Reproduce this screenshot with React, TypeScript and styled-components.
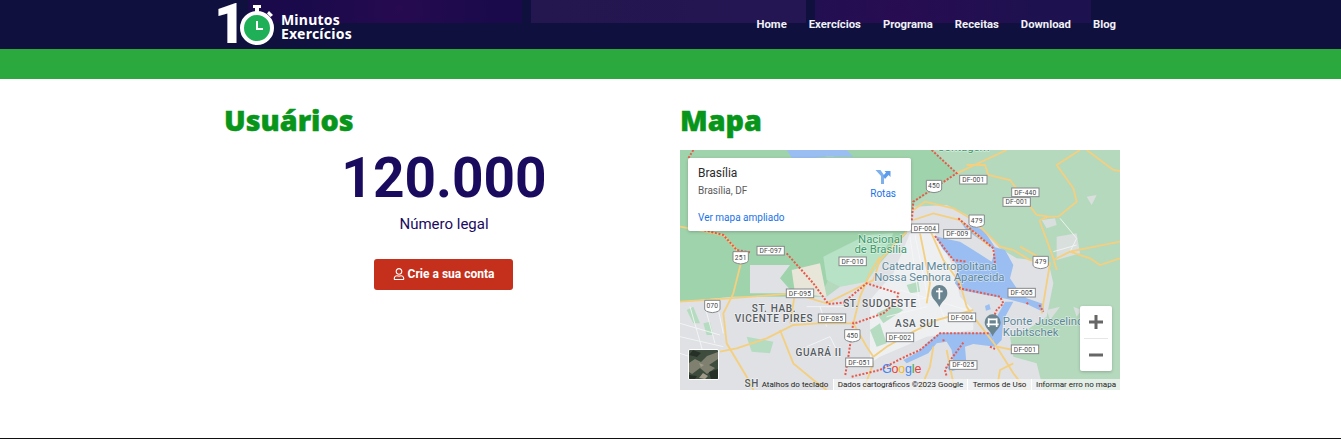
import React, { FC } from 'react';
import styled, { createGlobalStyle } from 'styled-components';
import { FaRegUser } from 'react-icons/fa';

const GlobalStyle = createGlobalStyle`
  html, body {
    margin: 0;
    padding: 0;
    background: #ffffff;
    font-family: 'Roboto', 'Liberation Sans', sans-serif;
  }
`;

const Header = styled.header`
  height: 49px;
  background-color: #10103f;
  background-repeat: no-repeat;
  background-size: 274px 23px, 275px 23px, 276px 23px;
  background-position: 248px 0, 531px 0, 815px 0;
  background-image:
    radial-gradient(circle at 55% 40%, #270a50 0, #1a0a4c 60%),
    linear-gradient(90deg, #24164e, #231653),
    radial-gradient(circle at 30% 50%, #280c52 0, #1e1150 70%);
`;

const HeaderInner = styled.div`
  width: 902px;
  height: 49px;
  margin-left: 218px;
  display: flex;
  align-items: center;
  justify-content: space-between;
`;

const Logo = styled.a`
  display: flex;
  align-items: center;
  color: #ffffff;
  height: 49px;
`;

const LogoOne = styled.span`
  font-family: 'Roboto', sans-serif;
  font-weight: 900;
  font-size: 55px;
  line-height: 49px;
  margin-left: -4px;
  margin-right: -7px;
`;

const LogoText = styled.span`
  font-family: 'Noto Sans', sans-serif;
  font-weight: 700;
  font-size: 14px;
  line-height: 14px;
  letter-spacing: 0.25px;
  margin-left: 4px;
  margin-top: 4px;
`;

const Nav = styled.nav`
  display: flex;
  gap: 22px;
  padding-right: 4px;
`;

const NavLink = styled.a`
  font-size: 11.3px;
  font-weight: 700;
  color: #f1f1f8;
  line-height: 14px;
`;

const GreenBar = styled.div`
  height: 30px;
  background: #2ca93e;
`;

const Main = styled.main`
  width: 896px;
  margin-left: 224px;
  padding-top: 19px;
  display: grid;
  grid-template-columns: 440px 440px;
  column-gap: 16px;
`;

const Column = styled.section`
  display: flex;
  flex-direction: column;
`;

const Title = styled.h2`
  margin: 0 0 9px;
  font-family: 'Noto Sans', sans-serif;
  font-weight: 900;
  font-size: 28.7px;
  line-height: 43px;
  color: #07951a;
  -webkit-text-stroke: 0.5px #07951a;
`;

const Stats = styled.div`
  display: flex;
  flex-direction: column;
  align-items: center;
`;

const BigNumber = styled.div`
  font-weight: 700;
  font-size: 55px;
  line-height: 56px;
  color: #1a0b5e;
`;

const Caption = styled.div`
  margin-top: 6px;
  font-size: 15px;
  line-height: 24px;
  color: #1a0b5e;
`;

const CtaButton = styled.a`
  margin-top: 23px;
  margin-right: 1px;
  width: 139px;
  height: 31px;
  box-sizing: border-box;
  padding-bottom: 2px;
  display: flex;
  align-items: center;
  justify-content: center;
  gap: 3px;
  border-radius: 3px;
  background: #c4301c;
  color: #ffffff;
  font-size: 12px;
  font-weight: 700;
`;

const MapFrame = styled.div`
  position: relative;
  width: 440px;
  height: 240px;
  overflow: hidden;
  background: #b5d9bd;
`;

const MapSvg = styled.svg`
  display: block;
  font-family: 'Roboto', sans-serif;
`;

const InfoCard = styled.div`
  position: absolute;
  top: 8px;
  left: 8px;
  width: 223px;
  height: 73px;
  box-sizing: border-box;
  padding: 8px 15px 0 10px;
  background: #ffffff;
  border-radius: 2px;
  box-shadow: 0 1px 3px rgba(60, 64, 67, 0.3);
  display: flex;
  justify-content: space-between;
`;

const PlaceName = styled.div`
  font-size: 12px;
  line-height: 14px;
  color: #2b2b2b;
`;

const PlaceAddress = styled.div`
  margin-top: 5px;
  font-size: 10px;
  line-height: 12px;
  color: #5b5b5b;
`;

const MapLink = styled.a`
  display: block;
  margin-top: 15px;
  font-size: 10px;
  line-height: 12px;
  color: #1a73e8;
`;

const Directions = styled.a`
  display: flex;
  flex-direction: column;
  align-items: center;
  gap: 3px;
  padding-top: 3px;
  font-size: 10px;
  line-height: 12px;
  color: #1a73e8;
`;

const ZoomBox = styled.div`
  position: absolute;
  top: 156px;
  left: 400px;
  width: 32px;
  height: 65px;
  background: #ffffff;
  border-radius: 2px;
  box-shadow: 0 1px 3px rgba(60, 64, 67, 0.3);
  display: flex;
  flex-direction: column;
  align-items: center;
`;

const ZoomKey = styled.div`
  height: 32px;
  width: 100%;
  display: flex;
  align-items: center;
  justify-content: center;
`;

const ZoomRule = styled.div`
  width: 24px;
  height: 1px;
  background: #e6e6e6;
`;

const LayerThumb = styled.div`
  position: absolute;
  left: 8px;
  top: 199px;
  width: 31px;
  height: 31px;
  box-sizing: border-box;
  border: 1px solid #ffffff;
  border-radius: 2px;
  overflow: hidden;
`;

const GoogleMark = styled.div`
  position: absolute;
  left: 202px;
  top: 212px;
  font-family: 'Liberation Sans', sans-serif;
  font-size: 12.5px;
  line-height: 14px;
  letter-spacing: -0.2px;
`;

const Glyph = styled.span<{ $c: string }>`
  color: ${(p) => p.$c};
`;

const Attribution = styled.div`
  position: absolute;
  right: 0;
  bottom: 0;
  height: 11px;
  display: flex;
  align-items: center;
  font-size: 8px;
  line-height: 11px;
  color: #222222;
`;

const AttrItem = styled.span<{ $bg?: boolean; $w: number }>`
  width: ${(p) => p.$w}px;
  height: 11px;
  box-sizing: border-box;
  white-space: nowrap;
  text-align: center;
  background: ${(p) => (p.$bg ? 'rgba(245, 245, 245, 0.72)' : 'transparent')};
  border-left: ${(p) => (p.$bg ? '1px solid #ffffff' : 'none')};
`;

const Footer = styled.footer`
  margin-top: 48px;
  height: 0;
  border-top: 1px solid #111111;
`;

const RoadLabel = styled.text`
  font-size: 20px;
  letter-spacing: 0.6px;
  fill: #444444;
  text-anchor: middle;
`;

const DistrictLabel = styled.text`
  font-size: 30px;
  font-weight: 500;
  letter-spacing: 2px;
  fill: #555b60;
  text-anchor: middle;
  paint-order: stroke;
  stroke: rgba(255, 255, 255, 0.55);
  stroke-width: 4px;
`;

const PlaceLabel = styled.text<{ $c: string; $a?: string }>`
  font-size: 34px;
  fill: ${(p) => p.$c};
  text-anchor: ${(p) => p.$a || 'middle'};
  paint-order: stroke;
  stroke: rgba(255, 255, 255, 0.5);
  stroke-width: 4px;
`;

// the map is drawn at 3x, in the 1320x720 space of the viewBox
const roadSigns: [string, number, number][] = [
  ['DF-097', 272, 302],
  ['DF-010', 518, 334],
  ['DF-001', 880, 89],
  ['DF-440', 1036, 127],
  ['DF-001', 1010, 156],
  ['DF-004', 735, 235],
  ['DF-009', 832, 252],
  ['DF-095', 360, 430],
  ['DF-085', 456, 505],
  ['DF-002', 660, 562],
  ['DF-051', 538, 637],
  ['DF-005', 1025, 428],
  ['DF-004', 846, 502],
  ['DF-001', 1035, 598],
  ['DF-025', 850, 645],
];

const shields: [string, number, number][] = [
  ['251', 182, 322],
  ['450', 762, 108],
  ['479', 890, 212],
  ['479', 1082, 336],
  ['070', 97, 468],
  ['450', 517, 556],
];

const yellowRoads = [
  'M1200,0 L1130,45 L1180,115 L1190,155 L1135,200 L1105,200 L1080,210',
  'M1220,0 L1300,60 L1320,63',
  'M830,70 L980,0',
  'M860,45 L915,45 L925,75 L990,90 L1070,195 L1105,200',
  'M1078,210 L1120,325 L1130,360',
  'M1120,330 L1170,305 L1320,275',
  'M1170,305 L1230,325 L1260,345 L1320,325',
  'M700,180 L735,155 L820,175 L880,210 L960,290 L1000,300 L1050,330 L1110,340',
  'M700,210 L760,190 L840,210 L930,290',
  'M750,240 L790,330 L840,400 L860,470 L880,500 L950,590 L1000,670 L1040,720',
  'M720,250 L750,400 L740,460',
  'M0,455 L150,445 L340,430 L440,460 L580,390 L600,330 L680,245',
  'M185,330 L160,430 L130,490 L140,580 L200,680 L220,720',
  'M120,605 L170,595 L260,565 L340,525 L415,520 L520,520',
  'M300,540 L340,640 L400,690 L440,720',
  'M345,430 L330,520',
  'M520,520 L560,590 L580,620',
  'M600,320 L570,370 L540,440 L520,520',
  'M580,620 L620,590 L700,545 L770,510 L880,480',
  'M760,590 L750,650 L720,720',
  'M800,600 L820,700',
  'M550,720 L580,640',
  'M1020,290 L1110,340 L1095,430 L1085,490',
  'M1000,640 L960,660 L950,720',
  'M950,590 L1000,600 L1080,598',
  'M0,230 L130,255 L170,300 L185,340',
];

const whiteStreets = [
  'M1140,205 L1190,265 L1170,305',
  'M1120,305 L1190,285',
  'M0,520 L120,555 M0,560 L130,590 M0,610 L30,620',
  'M30,470 L70,610 M75,470 L105,580 M115,480 L130,550',
  'M690,260 L720,470 M705,255 L745,450 M660,420 L860,480 M620,500 L740,470',
  'M600,600 L720,540 M590,470 L760,440 M780,470 L800,520',
  'M380,470 L500,470 M380,590 L450,560 L480,620 M420,470 L440,530',
];

const redBorders = [
  'M40,0 L25,25',
  'M755,0 L830,70 L700,155 L695,215',
  'M30,230 L130,255 L170,300 L210,307',
  'M320,310 L400,400 L445,462 L490,458 L560,400 L655,430 L650,455 L610,490 L530,518 L520,518 L505,620 L495,680',
  'M515,680 L600,660 L665,625 L720,600 L780,550 L930,550',
  'M835,205 L875,240 L940,295 L945,340',
  'M765,258 L820,330 L860,335',
  'M835,400 L840,415 L960,440 L970,460 L950,480 L935,515',
  'M1040,458 L1045,464 M1078,465 L1090,485',
  'M790,568 L792,578 M850,578 L815,625 L795,660 L800,680',
  'M930,590 L945,597',
];

const Sign: FC<{ text: string; x: number; y: number }> = ({ text, x, y }) => (
  <g>
    <rect x={x - 41} y={y - 13} width={82} height={26} fill="#ffffff" stroke="#85888a" strokeWidth="3" />
    <RoadLabel x={x} y={y + 7}>{text}</RoadLabel>
  </g>
);

const Shield: FC<{ text: string; x: number; y: number }> = ({ text, x, y }) => (
  <g>
    <path
      d={`M${x - 23},${y - 17} H${x + 23} V${y + 9} Q${x + 23},${y + 17} ${x},${y + 20} Q${x - 23},${y + 17} ${x - 23},${y + 9} Z`}
      fill="#ffffff"
      stroke="#85888a"
      strokeWidth="3"
    />
    <RoadLabel x={x} y={y + 7}>{text}</RoadLabel>
  </g>
);

const Pin: FC<{ x: number; y: number; kind: 'cross' | 'bridge' }> = ({ x, y, kind }) => (
  <g transform={`translate(${x},${y})`}>
    <path d="M0,40 C-6,22 -24,16 -24,-3 A24,24 0 1 1 24,-3 C24,16 6,22 0,40 Z" fill="#6a8590" />
    {kind === 'cross' ? (
      <path d="M0,-18 V16 M-10,-8 H10" stroke="#ffffff" strokeWidth="5" />
    ) : (
      <path d="M-12,-15 V11 M12,-15 V11 M-18,3 H18 M-12,-12 H12" stroke="#ffffff" strokeWidth="5" fill="none" />
    )}
  </g>
);

const MapDrawing: FC = () => (
  <MapSvg width={440} height={240} viewBox="0 0 1320 720">
    <rect width={1320} height={720} fill="#b5d9bd" />
    <path
      d="M0,0 H760 L830,70 L700,160 L690,250 L600,310 L470,330 L440,400 L420,440 L160,440 L0,455 Z"
      fill="#9fd3ab"
    />
    <path d="M430,320 L560,255 L640,250 L600,330 L570,395 L480,410 L440,390 Z" fill="#b7e2c5" />
    <path d="M335,360 L420,340 L440,440 L345,430 Z" fill="#e8e6d8" />
    <path d="M210,345 L330,345 L300,385 L340,430 L210,430 Z" fill="#dfe1e5" />
    {/* built up areas */}
    <path
      d="M0,455 L160,440 L440,440 L480,410 L560,395 L600,340 L680,250 L700,170 L800,165 L880,205 L960,295 L1010,325 L1105,335 L1120,400 L1100,500 L1040,540 L990,560 L1000,620 L1070,640 L1090,720 L0,720 Z"
      fill="#dfe1e5"
    />
    <path
      d="M640,370 L690,250 L760,240 L820,350 L840,440 L880,480 L880,540 L740,560 L600,620 L570,640 L570,450 Z"
      fill="#edeff1"
    />
    <path
      d="M1130,260 L1190,250 L1200,310 L1130,330 Z M1220,140 L1250,135 L1235,165 Z M1085,210 L1125,205 L1130,225 L1100,235 Z M320,0 H480 L460,20 H350 Z M1100,480 L1140,470 L1110,510 Z M1180,470 L1205,480 L1190,500 Z"
      fill="#d8dfdc"
    />
    <path d="M440,20 H520 L500,0 H320 L340,30 Z" fill="#9abef2" />
    <path d="M200,560 L280,575 L270,610 L215,605 Z M20,480 L40,470 L60,520 L40,520 Z M70,520 L90,515 L100,555 L80,555 Z M590,490 L640,465 L670,480 L610,520 Z M570,540 L600,520 L620,580 L590,590 Z M680,405 L715,395 L720,425 L690,430 Z" fill="#b5dcc0" />
    {/* lake */}
    <path
      d="M835,205 L868,228 L910,238 L945,292 L975,300 L1000,345 L990,385 L1012,418 L1040,445 L1090,462 L1092,487 L1040,462 L985,448 L840,420 L825,400 L835,350 L820,330 L790,300 L765,258 L790,265 L840,275 L880,300 L935,335 L945,300 L880,255 L855,235 Z"
      fill="#9abef2"
    />
    <path d="M975,455 L1000,455 L970,510 L965,570 L945,590 L935,550 L945,510 Z" fill="#9abef2" />
    <path
      d="M935,548 L780,548 L745,575 L715,605 L670,630 L680,640 L745,610 L770,580 L800,575 L815,600 L820,635 L800,650 L810,665 L860,650 L855,590 L880,582 L945,590 Z"
      fill="#9abef2"
    />
    <path d="M915,468 L928,462 L932,478 L918,482 Z" fill="#9abef2" />
    {whiteStreets.map((d) => (
      <path key={d} d={d} fill="none" stroke="#f5f6f7" strokeWidth="2.5" />
    ))}
    {yellowRoads.map((d) => (
      <path key={d} d={d} fill="none" stroke="#f4cf7f" strokeWidth="5.5" />
    ))}
    {redBorders.map((d) => (
      <path key={d} d={d} fill="none" stroke="#e8574a" strokeWidth="6" strokeDasharray="6 5" />
    ))}
    <PlaceLabel x={850} y={4} $c="#3c9a6c">Contagem</PlaceLabel>
    <PlaceLabel x={601} y={278} $c="#3c9a6c">Nacional</PlaceLabel>
    <PlaceLabel x={602} y={310} $c="#3c9a6c">de Brasília</PlaceLabel>
    <PlaceLabel x={778} y={360} $c="#5d8798">Catedral Metropolitana</PlaceLabel>
    <PlaceLabel x={778} y={394} $c="#5d8798">Nossa Senhora Aparecida</PlaceLabel>
    <PlaceLabel x={968} y={524} $c="#5d8798" $a="start">Ponte Juscelino</PlaceLabel>
    <PlaceLabel x={968} y={558} $c="#5d8798" $a="start">Kubitschek</PlaceLabel>
    <DistrictLabel x={282} y={486}>ST. HAB.</DistrictLabel>
    <DistrictLabel x={282} y={516}>VICENTE PIRES</DistrictLabel>
    <DistrictLabel x={600} y={470}>ST. SUDOESTE</DistrictLabel>
    <DistrictLabel x={712} y={530}>ASA SUL</DistrictLabel>
    <DistrictLabel x={416} y={618}>GUARÁ II</DistrictLabel>
    <DistrictLabel x={215} y={710}>SH</DistrictLabel>
    {shields.map(([t, x, y]) => (
      <Shield key={`${t}${x}`} text={t} x={x} y={y} />
    ))}
    {roadSigns.map(([t, x, y]) => (
      <Sign key={`${t}${x}`} text={t} x={x} y={y} />
    ))}
    <Pin x={778} y={432} kind="cross" />
    <Pin x={938} y={520} kind="bridge" />
  </MapSvg>
);

const DirectionsIcon: FC = () => (
  <svg width="16" height="16" viewBox="0 0 16 16">
    <path d="M0.5,1 H5.5 L9,6 V15 H6 V7 Z" fill="#7fb0ee" />
    <path d="M8,7 L11,3.5 L9.5,2 H15.5 V8 L13.5,6 L10,10 Z" fill="#5d9cec" />
  </svg>
);

const SatelliteThumb: FC = () => (
  <svg width="29" height="29" viewBox="0 0 29 29">
    <rect width="29" height="29" fill="#3e4c3d" />
    <path d="M0,13 L6,9 L12,12 L18,6 L29,2 V9 L20,15 L26,18 L18,24 L11,18 L3,24 L0,22 Z" fill="#7f8070" />
    <path d="M4,0 L12,3 L8,7 L0,5 Z M20,22 L29,19 V29 H22 Z M0,25 L8,26 L6,29 H0 Z" fill="#263026" />
    <path d="M14,23 L19,26 L16,29 L10,28 Z M10,13 L15,15 L12,17 Z" fill="#a09c88" />
  </svg>
);

const App: FC = () => (
  <React.Fragment>
    <GlobalStyle />
    <Header>
      <HeaderInner>
        <Logo>
          <LogoOne>1</LogoOne>
          <svg width="38" height="42" viewBox="0 0 38 42">
            <path d="M14,1 H22 V4 H20 V8 H16 V4 H14 Z" fill="#ffffff" />
            <path d="M30,7 L34,11 L31.5,13 L28,9.5 Z" fill="#ffffff" />
            <circle cx="18" cy="24" r="15" fill="#1fb057" stroke="#ffffff" strokeWidth="4" />
            <path d="M18,17 V25 H24" fill="none" stroke="#ffffff" strokeWidth="2" />
          </svg>
          <LogoText>
            Minutos
            <br />
            Exercícios
          </LogoText>
        </Logo>
        <Nav>
          <NavLink>Home</NavLink>
          <NavLink>Exercícios</NavLink>
          <NavLink>Programa</NavLink>
          <NavLink>Receitas</NavLink>
          <NavLink>Download</NavLink>
          <NavLink>Blog</NavLink>
        </Nav>
      </HeaderInner>
    </Header>
    <GreenBar />
    <Main>
      <Column>
        <Title>Usuários</Title>
        <Stats>
          <BigNumber>120.000</BigNumber>
          <Caption>Número legal</Caption>
          <CtaButton>
            <FaRegUser size={12} />
            Crie a sua conta
          </CtaButton>
        </Stats>
      </Column>
      <Column>
        <Title>Mapa</Title>
        <MapFrame>
          <MapDrawing />
          <InfoCard>
            <div>
              <PlaceName>Brasília</PlaceName>
              <PlaceAddress>Brasília, DF</PlaceAddress>
              <MapLink>Ver mapa ampliado</MapLink>
            </div>
            <Directions>
              <DirectionsIcon />
              Rotas
            </Directions>
          </InfoCard>
          <ZoomBox>
            <ZoomKey>
              <svg width="16" height="16" viewBox="0 0 16 16">
                <path d="M1,8 H15 M8,1 V15" stroke="#666666" strokeWidth="3" />
              </svg>
            </ZoomKey>
            <ZoomRule />
            <ZoomKey>
              <svg width="16" height="16" viewBox="0 0 16 16">
                <path d="M1,8 H15" stroke="#666666" strokeWidth="3" />
              </svg>
            </ZoomKey>
          </ZoomBox>
          <LayerThumb>
            <SatelliteThumb />
          </LayerThumb>
          <GoogleMark>
            <Glyph $c="#4285f4">G</Glyph>
            <Glyph $c="#ea4335">o</Glyph>
            <Glyph $c="#fbbc05">o</Glyph>
            <Glyph $c="#4285f4">g</Glyph>
            <Glyph $c="#34a853">l</Glyph>
            <Glyph $c="#ea4335">e</Glyph>
          </GoogleMark>
          <Attribution>
            <AttrItem $w={76}>Atalhos do teclado</AttrItem>
            <AttrItem $w={134} $bg>Dados cartográficos ©2023 Google</AttrItem>
            <AttrItem $w={64} $bg>Termos de Uso</AttrItem>
            <AttrItem $w={89} $bg>Informar erro no mapa</AttrItem>
          </Attribution>
        </MapFrame>
      </Column>
    </Main>
    <Footer />
  </React.Fragment>
);

export default App;
